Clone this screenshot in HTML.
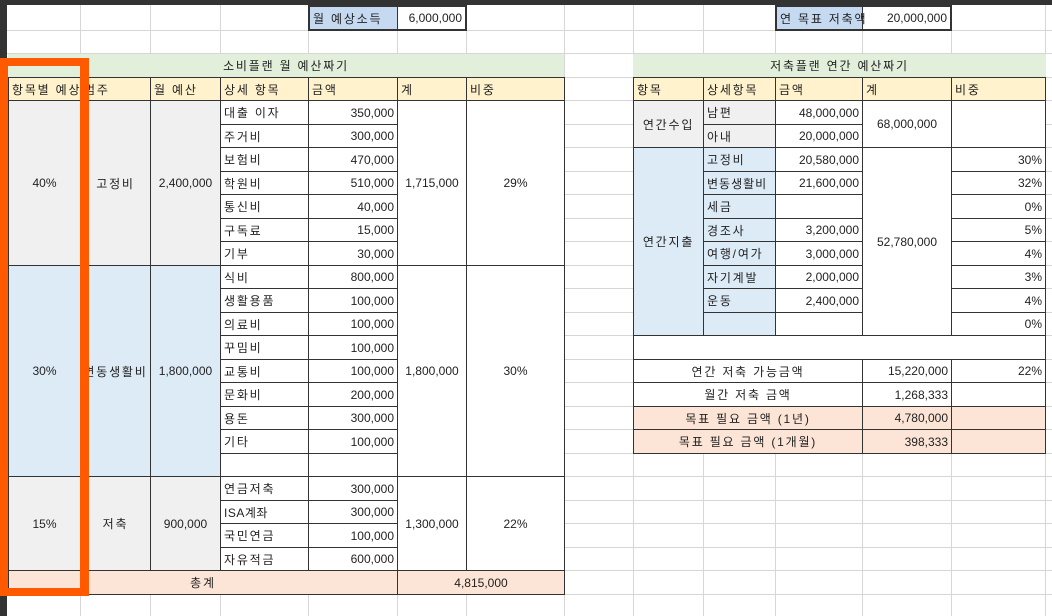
<!DOCTYPE html>
<html><head><meta charset="utf-8"><style>
body{margin:0;width:1052px;height:616px;position:relative;overflow:hidden;background:#fff;font-family:"Liberation Sans","Noto Sans CJK KR",sans-serif;font-size:12px;color:#222}
.c{position:absolute;border:1px solid #333;box-sizing:border-box;display:flex;align-items:center;padding:0 3px;white-space:nowrap;overflow:visible;letter-spacing:1.8px}
.n{border-color:transparent}
.r{justify-content:flex-end;letter-spacing:0}
.m{justify-content:center}
.d{letter-spacing:0}
.g{background:#f0f0f0}.b{background:#ddebf7}.y{background:#fff2cc}.gr{background:#e2efda}.p{background:#fce4d6}.lb{background:#c5d9f1}.w{background:#fff}
.o{position:absolute;background:#ff5a00}
</style></head><body>
<svg style="position:absolute;left:0;top:0" width="1052" height="616">
<g stroke="#d6d6d6" stroke-width="1">
<line x1="80.5" y1="0" x2="80.5" y2="616"/><line x1="150.5" y1="0" x2="150.5" y2="616"/><line x1="220.5" y1="0" x2="220.5" y2="616"/><line x1="308.5" y1="0" x2="308.5" y2="616"/><line x1="397.5" y1="0" x2="397.5" y2="616"/><line x1="466.5" y1="0" x2="466.5" y2="616"/><line x1="564.5" y1="0" x2="564.5" y2="616"/><line x1="633.5" y1="0" x2="633.5" y2="616"/><line x1="703.5" y1="0" x2="703.5" y2="616"/><line x1="775.5" y1="0" x2="775.5" y2="616"/><line x1="862.5" y1="0" x2="862.5" y2="616"/><line x1="951.5" y1="0" x2="951.5" y2="616"/><line x1="1045.5" y1="0" x2="1045.5" y2="616"/>
<line x1="0" y1="30.5" x2="1052" y2="30.5"/><line x1="0" y1="53.5" x2="1052" y2="53.5"/><line x1="0" y1="77.5" x2="1052" y2="77.5"/><line x1="0" y1="100.5" x2="1052" y2="100.5"/><line x1="0" y1="124.5" x2="1052" y2="124.5"/><line x1="0" y1="147.5" x2="1052" y2="147.5"/><line x1="0" y1="171.5" x2="1052" y2="171.5"/><line x1="0" y1="194.5" x2="1052" y2="194.5"/><line x1="0" y1="218.5" x2="1052" y2="218.5"/><line x1="0" y1="241.5" x2="1052" y2="241.5"/><line x1="0" y1="265.5" x2="1052" y2="265.5"/><line x1="0" y1="288.5" x2="1052" y2="288.5"/><line x1="0" y1="312.5" x2="1052" y2="312.5"/><line x1="0" y1="335.5" x2="1052" y2="335.5"/><line x1="0" y1="359.5" x2="1052" y2="359.5"/><line x1="0" y1="382.5" x2="1052" y2="382.5"/><line x1="0" y1="406.5" x2="1052" y2="406.5"/><line x1="0" y1="429.5" x2="1052" y2="429.5"/><line x1="0" y1="453.5" x2="1052" y2="453.5"/><line x1="0" y1="476.5" x2="1052" y2="476.5"/><line x1="0" y1="500.5" x2="1052" y2="500.5"/><line x1="0" y1="523.5" x2="1052" y2="523.5"/><line x1="0" y1="547.5" x2="1052" y2="547.5"/><line x1="0" y1="570.5" x2="1052" y2="570.5"/><line x1="0" y1="594.5" x2="1052" y2="594.5"/>
</g></svg>
<div style="position:absolute;left:0;top:0;width:1052px;height:5px;background:#333"></div>
<div style="position:absolute;left:0;top:0;width:7px;height:616px;background:#333"></div>

<div class="c lb" style="left:308px;top:5px;width:90px;height:26px;border-width:2px 1px 2px 2px">월 예상소득</div>
<div class="c r" style="left:397px;top:5px;width:70px;height:26px;border-width:2px 2px 2px 0">6,000,000</div>
<div class="c lb" style="left:775px;top:5px;width:88px;height:26px;border-width:2px 1px 2px 2px">연 목표 저축액</div>
<div class="c r" style="left:862px;top:5px;width:90px;height:26px;border-width:2px 2px 2px 0">20,000,000</div>

<div class="c n gr m" style="left:8px;top:54px;width:556px;height:23px">소비플랜 월 예산짜기</div>
<div class="c y" style="left:8px;top:77px;width:73px;height:24px">항목별 예상</div>
<div class="c y" style="left:80px;top:77px;width:71px;height:24px">범주</div>
<div class="c y" style="left:150px;top:77px;width:71px;height:24px">월 예산</div>
<div class="c y" style="left:220px;top:77px;width:89px;height:24px">상세 항목</div>
<div class="c y" style="left:308px;top:77px;width:90px;height:24px">금액</div>
<div class="c y" style="left:397px;top:77px;width:70px;height:24px">계</div>
<div class="c y" style="left:466px;top:77px;width:99px;height:24px">비중</div>

<div class="c g m d" style="left:8px;top:100px;width:73px;height:166px">40%</div>
<div class="c g m" style="left:80px;top:100px;width:71px;height:166px">고정비</div>
<div class="c g m d" style="left:150px;top:100px;width:71px;height:166px">2,400,000</div>
<div class="c w m d" style="left:397px;top:100px;width:70px;height:166px">1,715,000</div>
<div class="c w m d" style="left:466px;top:100px;width:99px;height:166px">29%</div>
<div class="c w" style="left:220px;top:100px;width:89px;height:25px">대출 이자</div><div class="c w r" style="left:308px;top:100px;width:90px;height:25px">350,000</div>
<div class="c w" style="left:220px;top:124px;width:89px;height:24px">주거비</div><div class="c w r" style="left:308px;top:124px;width:90px;height:24px">300,000</div>
<div class="c w" style="left:220px;top:147px;width:89px;height:25px">보험비</div><div class="c w r" style="left:308px;top:147px;width:90px;height:25px">470,000</div>
<div class="c w" style="left:220px;top:171px;width:89px;height:24px">학원비</div><div class="c w r" style="left:308px;top:171px;width:90px;height:24px">510,000</div>
<div class="c w" style="left:220px;top:194px;width:89px;height:25px">통신비</div><div class="c w r" style="left:308px;top:194px;width:90px;height:25px">40,000</div>
<div class="c w" style="left:220px;top:218px;width:89px;height:24px">구독료</div><div class="c w r" style="left:308px;top:218px;width:90px;height:24px">15,000</div>
<div class="c w" style="left:220px;top:241px;width:89px;height:25px">기부</div><div class="c w r" style="left:308px;top:241px;width:90px;height:25px">30,000</div>

<div class="c b m d" style="left:8px;top:265px;width:73px;height:212px">30%</div>
<div class="c b m" style="left:80px;top:265px;width:71px;height:212px">변동생활비</div>
<div class="c b m d" style="left:150px;top:265px;width:71px;height:212px">1,800,000</div>
<div class="c w m d" style="left:397px;top:265px;width:70px;height:212px">1,800,000</div>
<div class="c w m d" style="left:466px;top:265px;width:99px;height:212px">30%</div>
<div class="c w" style="left:220px;top:265px;width:89px;height:24px">식비</div><div class="c w r" style="left:308px;top:265px;width:90px;height:24px">800,000</div>
<div class="c w" style="left:220px;top:288px;width:89px;height:25px">생활용품</div><div class="c w r" style="left:308px;top:288px;width:90px;height:25px">100,000</div>
<div class="c w" style="left:220px;top:312px;width:89px;height:24px">의료비</div><div class="c w r" style="left:308px;top:312px;width:90px;height:24px">100,000</div>
<div class="c w" style="left:220px;top:335px;width:89px;height:25px">꾸밈비</div><div class="c w r" style="left:308px;top:335px;width:90px;height:25px">100,000</div>
<div class="c w" style="left:220px;top:359px;width:89px;height:24px">교통비</div><div class="c w r" style="left:308px;top:359px;width:90px;height:24px">100,000</div>
<div class="c w" style="left:220px;top:382px;width:89px;height:25px">문화비</div><div class="c w r" style="left:308px;top:382px;width:90px;height:25px">200,000</div>
<div class="c w" style="left:220px;top:406px;width:89px;height:24px">용돈</div><div class="c w r" style="left:308px;top:406px;width:90px;height:24px">300,000</div>
<div class="c w" style="left:220px;top:429px;width:89px;height:25px">기타</div><div class="c w r" style="left:308px;top:429px;width:90px;height:25px">100,000</div>
<div class="c w" style="left:220px;top:453px;width:89px;height:24px"></div><div class="c w r" style="left:308px;top:453px;width:90px;height:24px"></div>

<div class="c g m d" style="left:8px;top:476px;width:73px;height:95px">15%</div>
<div class="c g m" style="left:80px;top:476px;width:71px;height:95px">저축</div>
<div class="c g m d" style="left:150px;top:476px;width:71px;height:95px">900,000</div>
<div class="c w m d" style="left:397px;top:476px;width:70px;height:95px">1,300,000</div>
<div class="c w m d" style="left:466px;top:476px;width:99px;height:95px">22%</div>
<div class="c w" style="left:220px;top:476px;width:89px;height:25px">연금저축</div><div class="c w r" style="left:308px;top:476px;width:90px;height:25px">300,000</div>
<div class="c w" style="left:220px;top:500px;width:89px;height:24px;letter-spacing:0.5px">ISA계좌</div><div class="c w r" style="left:308px;top:500px;width:90px;height:24px">300,000</div>
<div class="c w" style="left:220px;top:523px;width:89px;height:25px">국민연금</div><div class="c w r" style="left:308px;top:523px;width:90px;height:25px">100,000</div>
<div class="c w" style="left:220px;top:547px;width:89px;height:24px">자유적금</div><div class="c w r" style="left:308px;top:547px;width:90px;height:24px">600,000</div>
<div class="c p m" style="left:8px;top:570px;width:390px;height:25px">총계</div>
<div class="c p m d" style="left:397px;top:570px;width:168px;height:25px">4,815,000</div>

<div class="c n gr m" style="left:633px;top:54px;width:413px;height:23px">저축플랜 연간 예산짜기</div>
<div class="c y" style="left:633px;top:77px;width:71px;height:24px">항목</div>
<div class="c y" style="left:703px;top:77px;width:73px;height:24px">상세항목</div>
<div class="c y" style="left:775px;top:77px;width:88px;height:24px">금액</div>
<div class="c y" style="left:862px;top:77px;width:90px;height:24px">계</div>
<div class="c y" style="left:951px;top:77px;width:95px;height:24px">비중</div>

<div class="c g m" style="left:633px;top:100px;width:71px;height:48px">연간수입</div>
<div class="c g" style="left:703px;top:100px;width:73px;height:25px">남편</div><div class="c w r" style="left:775px;top:100px;width:88px;height:25px">48,000,000</div>
<div class="c g" style="left:703px;top:124px;width:73px;height:24px">아내</div><div class="c w r" style="left:775px;top:124px;width:88px;height:24px">20,000,000</div>
<div class="c w m d" style="left:862px;top:100px;width:90px;height:48px">68,000,000</div>
<div class="c w" style="left:951px;top:100px;width:95px;height:48px"></div>

<div class="c b m" style="left:633px;top:147px;width:71px;height:189px">연간지출</div>
<div class="c w m d" style="left:862px;top:147px;width:90px;height:189px">52,780,000</div>
<div class="c b" style="left:703px;top:147px;width:73px;height:25px">고정비</div><div class="c w r" style="left:775px;top:147px;width:88px;height:25px">20,580,000</div><div class="c w r" style="left:951px;top:147px;width:95px;height:25px">30%</div>
<div class="c b" style="left:703px;top:171px;width:73px;height:24px;letter-spacing:1px">변동생활비</div><div class="c w r" style="left:775px;top:171px;width:88px;height:24px">21,600,000</div><div class="c w r" style="left:951px;top:171px;width:95px;height:24px">32%</div>
<div class="c b" style="left:703px;top:194px;width:73px;height:25px">세금</div><div class="c w r" style="left:775px;top:194px;width:88px;height:25px"></div><div class="c w r" style="left:951px;top:194px;width:95px;height:25px">0%</div>
<div class="c b" style="left:703px;top:218px;width:73px;height:24px">경조사</div><div class="c w r" style="left:775px;top:218px;width:88px;height:24px">3,200,000</div><div class="c w r" style="left:951px;top:218px;width:95px;height:24px">5%</div>
<div class="c b" style="left:703px;top:241px;width:73px;height:25px">여행/여가</div><div class="c w r" style="left:775px;top:241px;width:88px;height:25px">3,000,000</div><div class="c w r" style="left:951px;top:241px;width:95px;height:25px">4%</div>
<div class="c b" style="left:703px;top:265px;width:73px;height:24px">자기계발</div><div class="c w r" style="left:775px;top:265px;width:88px;height:24px">2,000,000</div><div class="c w r" style="left:951px;top:265px;width:95px;height:24px">3%</div>
<div class="c b" style="left:703px;top:288px;width:73px;height:25px">운동</div><div class="c w r" style="left:775px;top:288px;width:88px;height:25px">2,400,000</div><div class="c w r" style="left:951px;top:288px;width:95px;height:25px">4%</div>
<div class="c b" style="left:703px;top:312px;width:73px;height:24px"></div><div class="c w r" style="left:775px;top:312px;width:88px;height:24px"></div><div class="c w r" style="left:951px;top:312px;width:95px;height:24px">0%</div>

<div class="c w" style="left:633px;top:335px;width:413px;height:25px"></div>
<div class="c w m" style="left:633px;top:359px;width:230px;height:24px">연간 저축 가능금액</div><div class="c w r" style="left:862px;top:359px;width:90px;height:24px">15,220,000</div><div class="c w r" style="left:951px;top:359px;width:95px;height:24px">22%</div>
<div class="c w m" style="left:633px;top:382px;width:230px;height:25px">월간 저축 금액</div><div class="c w r" style="left:862px;top:382px;width:90px;height:25px">1,268,333</div><div class="c w" style="left:951px;top:382px;width:95px;height:25px"></div>
<div class="c p m" style="left:633px;top:406px;width:230px;height:24px">목표 필요 금액 (1년)</div><div class="c p r" style="left:862px;top:406px;width:90px;height:24px">4,780,000</div><div class="c p" style="left:951px;top:406px;width:95px;height:24px"></div>
<div class="c p m" style="left:633px;top:429px;width:230px;height:25px">목표 필요 금액 (1개월)</div><div class="c p r" style="left:862px;top:429px;width:90px;height:25px">398,333</div><div class="c p" style="left:951px;top:429px;width:95px;height:25px"></div>

<div class="o" style="left:0;top:58px;width:89px;height:8px"></div>
<div class="o" style="left:0;top:588px;width:89px;height:8px"></div>
<div class="o" style="left:0;top:58px;width:8px;height:538px"></div>
<div class="o" style="left:80px;top:58px;width:9px;height:538px"></div>
</body></html>
